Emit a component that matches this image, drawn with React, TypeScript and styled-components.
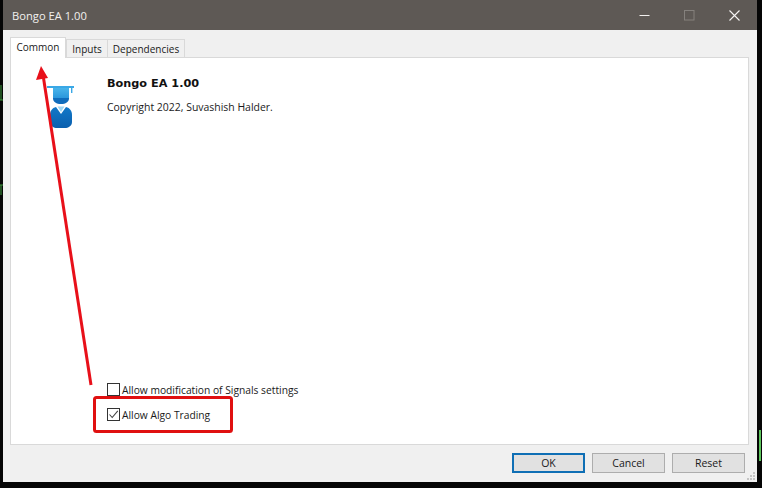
import React from "react";
import styled, { createGlobalStyle } from "styled-components";

const Global = createGlobalStyle`
  html, body { margin: 0; padding: 0; background: #000; }
  body { width: 762px; height: 488px; overflow: hidden; }
`;

const Screen = styled.div`
  position: relative;
  width: 762px;
  height: 488px;
  box-sizing: border-box;
  padding: 0 5px 6px 3px;
  background: #050505;
  font-family: "Open Sans", "Noto Sans", sans-serif;
  color: #1a1a1a;
`;

const Win = styled.div`
  height: 100%;
  display: flex;
  flex-direction: column;
  background: #f0f0f0;
  position: relative;
`;

const TitleBar = styled.div`
  height: 30px;
  flex: none;
  display: flex;
  align-items: center;
  background: #5e5955;
  padding-left: 9px;
`;

const Title = styled.div`
  flex: 1;
  color: #f2f0ee;
  font-size: 11.2px;
`;

const WinButton = styled.div`
  width: 45px;
  height: 30px;
  display: flex;
  align-items: center;
  justify-content: center;
`;

const Content = styled.div`
  flex: 1;
  display: flex;
  flex-direction: column;
  padding: 7px 8px 0 7px;
  min-height: 0;
`;

const TabRow = styled.div`
  display: flex;
  align-items: flex-end;
  height: 21px;
  flex: none;
  position: relative;
  z-index: 1;
  margin-bottom: -1px;
`;

const Tab = styled.div<{ $active?: boolean; $w: number }>`
  box-sizing: border-box;
  width: ${(p) => p.$w}px;
  height: ${(p) => (p.$active ? 21 : 19)}px;
  display: flex;
  align-items: ${(p) => (p.$active ? "flex-start" : "center")};
  justify-content: center;
  padding-top: ${(p) => (p.$active ? 2 : 0)}px;
  font-size: 10px;
  background: ${(p) => (p.$active ? "#fff" : "#f0f0f0")};
  border: 1px solid #d9d9d9;
  border-bottom: ${(p) => (p.$active ? "none" : "1px solid #d9d9d9")};
  margin-left: ${(p) => (p.$active ? 0 : -1)}px;
  position: relative;
  z-index: ${(p) => (p.$active ? 2 : 1)};
  &:nth-child(2) { margin-left: 0; }
`;

const Panel = styled.div`
  height: 388px;
  flex: none;
  box-sizing: border-box;
  background: #fff;
  border: 1px solid #d9d9d9;
  display: flex;
  flex-direction: column;
  padding: 17px 0 23px 36px;
`;

const Header = styled.div`
  display: flex;
  gap: 32px;
`;

const LogoSlot = styled.div`
  padding-top: 11px;
  flex: none;
`;

const InfoCol = styled.div`
  display: flex;
  flex-direction: column;
`;

const AppName = styled.div`
  font-size: 11.25px;
  font-weight: 700;
  font-family: "DejaVu Sans", sans-serif;
  line-height: 17px;
  color: #111;
`;

const Copyright = styled.div`
  font-size: 10.45px;
  line-height: 14px;
  margin-top: 8px;
`;

const Checks = styled.div`
  margin-top: auto;
  padding-left: 60px;
  display: flex;
  flex-direction: column;
  gap: 12px;
`;

const CheckRow = styled.div`
  display: flex;
  align-items: center;
  gap: 2px;
  height: 13px;
  font-size: 10.25px;
`;

const Box = styled.div`
  width: 13px;
  height: 13px;
  box-sizing: border-box;
  border: 1px solid #333;
  background: #fff;
  display: flex;
  align-items: center;
  justify-content: center;
`;

const Footer = styled.div`
  flex: 1;
  display: flex;
  justify-content: flex-end;
  gap: 7px;
  padding: 8px 4px 0 0;
`;

const Button = styled.div<{ $primary?: boolean }>`
  box-sizing: border-box;
  width: 73px;
  height: 20px;
  display: flex;
  align-items: center;
  justify-content: center;
  font-size: 10.5px;
  background: #e1e1e1;
  border: ${(p) => (p.$primary ? "2px solid #0f6fb5" : "1px solid #adadad")};
`;

const Grip = styled.svg`
  position: absolute;
  right: 1px;
  bottom: 1px;
`;

const Overlay = styled.svg`
  position: absolute;
  left: 0;
  top: 0;
  pointer-events: none;
`;

const Check = () => (
  <svg width="11" height="11" viewBox="0 0 11 11" fill="none">
    <path d="M1.5 5.5 L4.2 8.5 L9.8 1.8" stroke="#444" strokeWidth="1.1" />
  </svg>
);

const Logo = () => (
  <svg width="28" height="44" viewBox="0 0 28 44" style={{ display: "block" }}>
    <defs>
      <linearGradient id="cap" x1="0" y1="0" x2="0" y2="1">
        <stop offset="0" stopColor="#49b4ea" />
        <stop offset="1" stopColor="#2b97dc" />
      </linearGradient>
      <linearGradient id="body" x1="0" y1="0" x2="0" y2="1">
        <stop offset="0" stopColor="#1178c8" />
        <stop offset="1" stopColor="#0a5fae" />
      </linearGradient>
    </defs>
    <rect x="0" y="0" width="27" height="2" fill="#3aa8e6" />
    <rect x="24" y="2" width="1.4" height="5" fill="#3aa8e6" />
    <path d="M6 2 H22 V12 H6 Z" fill="url(#cap)" />
    <path d="M6 12 H22 V12.5 C22 16 18.5 18 14 18 C9.5 18 6 16 6 12.5 Z" fill="#0f6cbc" />
    <path
      d="M9 21 L14 28 L19 21 C23 22 25 25 25 29 V36 C25 40 21 42 18 42 H10 C7 42 3 40 3 36 V29 C3 25 5 22 9 21 Z"
      fill="url(#body)"
    />
    <path d="M10.5 20.5 H17.5 L14 26 Z" fill="#9dd6f3" />
  </svg>
);

export default function App() {
  return (
    <Screen>
      <Global />
      <Win>
        <TitleBar>
          <Title>Bongo EA 1.00</Title>
          <WinButton>
            <svg width="11" height="11" viewBox="0 0 11 11">
              <rect x="0.5" y="5" width="10" height="1" fill="#f2f0ee" />
            </svg>
          </WinButton>
          <WinButton>
            <svg width="11" height="11" viewBox="0 0 11 11" fill="none">
              <rect x="0.5" y="0.5" width="9.5" height="9.5" stroke="#85817d" />
            </svg>
          </WinButton>
          <WinButton>
            <svg width="11" height="11" viewBox="0 0 11 11" fill="none">
              <path d="M0.5 0.5 L10.5 10.5 M10.5 0.5 L0.5 10.5" stroke="#f6f5f4" strokeWidth="1.1" />
            </svg>
          </WinButton>
        </TitleBar>
        <Content>
          <TabRow>
            <Tab $active $w={56}>Common</Tab>
            <Tab $w={42}>Inputs</Tab>
            <Tab $w={78}>Dependencies</Tab>
          </TabRow>
          <Panel>
            <Header>
              <LogoSlot>
                <Logo />
              </LogoSlot>
              <InfoCol>
                <AppName>Bongo EA 1.00</AppName>
                <Copyright>Copyright 2022, Suvashish Halder.</Copyright>
              </InfoCol>
            </Header>
            <Checks>
              <CheckRow>
                <Box />
                Allow modification of Signals settings
              </CheckRow>
              <CheckRow>
                <Box>
                  <Check />
                </Box>
                Allow Algo Trading
              </CheckRow>
            </Checks>
          </Panel>
          <Footer>
            <Button $primary>OK</Button>
            <Button>Cancel</Button>
            <Button>Reset</Button>
          </Footer>
        </Content>
        <Grip width="9" height="9" viewBox="0 0 9 9" fill="#c4c4c4">
          <rect x="6" y="0" width="2" height="2" />
          <rect x="3" y="3" width="2" height="2" />
          <rect x="6" y="3" width="2" height="2" />
          <rect x="0" y="6" width="2" height="2" />
          <rect x="3" y="6" width="2" height="2" />
          <rect x="6" y="6" width="2" height="2" />
        </Grip>
      </Win>
      <Overlay width="762" height="488" viewBox="0 0 762 488" fill="none">
        <path d="M1 85 V100 M0 100 H3 M1 185 V195 M0 185 H3" stroke="#3f9a3f" strokeWidth="1" />
        <path d="M760 430 V461" stroke="#5cc45c" strokeWidth="2" />
        <path d="M91 385 L43.5 78" stroke="#e8101a" strokeWidth="3" />
        <path d="M41 66 L36 80 L48 78 Z" fill="#e8101a" />
        <rect x="94.5" y="397.5" width="137" height="34" rx="2" stroke="#e01010" strokeWidth="3" />
      </Overlay>
    </Screen>
  );
}
